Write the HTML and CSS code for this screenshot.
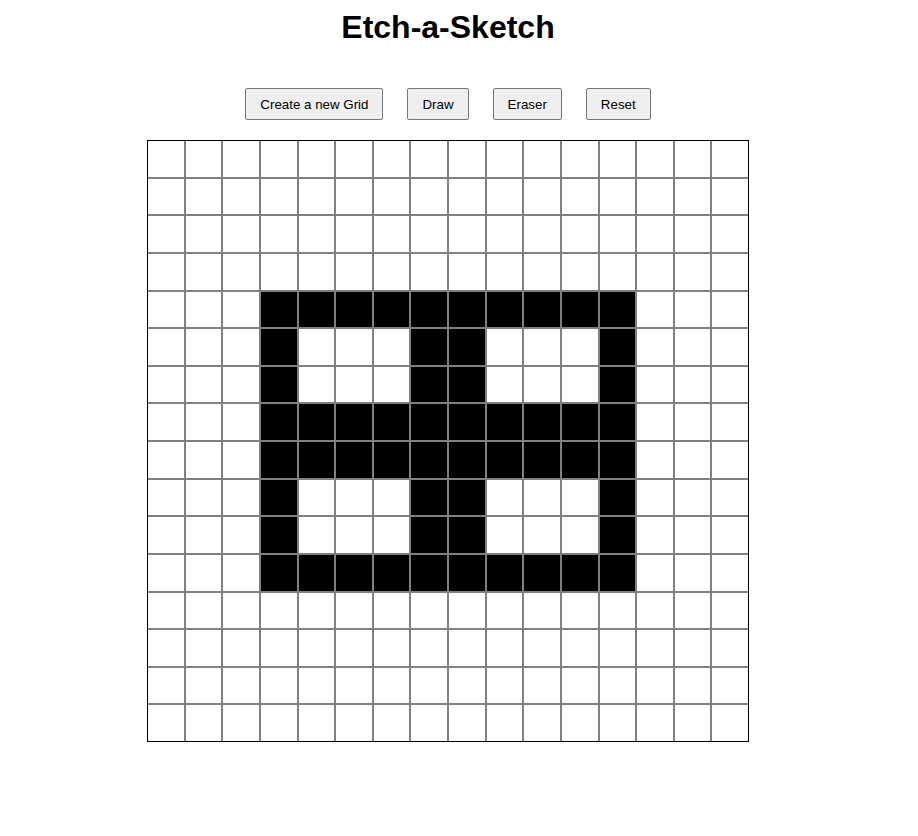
FILE: index.html
```html
<!DOCTYPE html>
<html lang="en">
<head>
<meta charset="utf-8">
<title>Etch-a-Sketch</title>
<link rel="stylesheet" href="styles.css">
</head>
<body>
<main class="page">
  <h1 class="title">Etch-a-Sketch</h1>
  <div class="controls">
    <button class="btn">Create a new Grid</button>
    <button class="btn">Draw</button>
    <button class="btn">Eraser</button>
    <button class="btn">Reset</button>
  </div>
  <div class="grid" id="grid"></div>
</main>
<script src="script.js"></script>
</body>
</html>
```
FILE: styles.css
```css
html, body {
  margin: 0;
  padding: 0;
  background: #ffffff;
}
.page {
  width: 896px;
  display: flex;
  flex-direction: column;
  align-items: center;
  font-family: "Liberation Sans", Arial, sans-serif;
}
.title {
  margin: 9px 0 0;
  font-size: 32px;
  line-height: 37px;
  font-weight: bold;
  color: #000;
}
.controls {
  margin-top: 42px;
  display: flex;
  gap: 24px;
}
.btn {
  height: 32px;
  padding: 0 14px;
  font-family: "Liberation Sans", Arial, sans-serif;
  font-size: 13.33px;
  color: #000;
  background: #efefef;
  border: 1px solid #767676;
  border-radius: 2px;
}
.grid {
  margin-top: 20px;
  width: 600px;
  height: 600px;
  border: 1px solid #000;
  background: #808080;
  display: grid;
  grid-template-columns: repeat(16, 1fr);
  grid-template-rows: repeat(16, 1fr);
  gap: 2px;
}
.cell {
  background: #fff;
}
.cell.on {
  background: #000;
}
```
FILE: script.js
```js
const pattern = [
  "1111111111",
  "1000110001",
  "1000110001",
  "1111111111",
  "1111111111",
  "1000110001",
  "1000110001",
  "1111111111"
];
const grid = document.getElementById("grid");
for (let r = 0; r < 16; r++) {
  for (let c = 0; c < 16; c++) {
    const d = document.createElement("div");
    d.className = "cell";
    const pr = r - 4, pc = c - 3;
    if (pr >= 0 && pr < 8 && pc >= 0 && pc < 10 && pattern[pr][pc] === "1") {
      d.classList.add("on");
    }
    grid.appendChild(d);
  }
}
```
